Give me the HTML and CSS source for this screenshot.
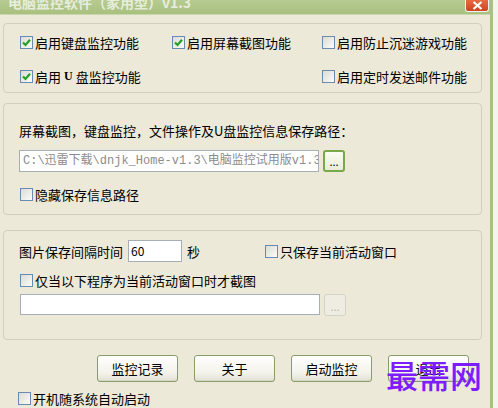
FILE: index.html
```html
<!DOCTYPE html>
<html lang="zh-CN">
<head>
    <meta charset="UTF-8">
    <title>电脑监控软件（家用型）v1.3</title>
    <link rel="stylesheet" href="styles.css">
</head>
<body>
    <div class="window">
        <div class="titlebar">
            <span class="title">电脑监控软件（家用型）v1.3</span>
            <span class="close">
                <svg width="11" height="9" viewBox="0 0 11 9"><path d="M1.5 1 L9.5 8 M9.5 1 L1.5 8" stroke="#fff" stroke-width="2.2"/></svg>
            </span>
        </div>

        <div class="main">
            <div class="group features">
                <label class="check"><span class="cb on"><svg width="11" height="11" viewBox="0 0 11 11"><path d="M2 5.5 L4.5 8 L9 2.8" fill="none" stroke="#21a121" stroke-width="2.2"/></svg></span>启用键盘监控功能</label>
                <label class="check"><span class="cb on"><svg width="11" height="11" viewBox="0 0 11 11"><path d="M2 5.5 L4.5 8 L9 2.8" fill="none" stroke="#21a121" stroke-width="2.2"/></svg></span>启用屏幕截图功能</label>
                <label class="check"><span class="cb"></span>启用防止沉迷游戏功能</label>
                <label class="check"><span class="cb on"><svg width="11" height="11" viewBox="0 0 11 11"><path d="M2 5.5 L4.5 8 L9 2.8" fill="none" stroke="#21a121" stroke-width="2.2"/></svg></span>启用<b class="u">U</b>盘监控功能</label>
                <label class="check col3"><span class="cb"></span>启用定时发送邮件功能</label>
            </div>

            <div class="group paths">
                <div class="caption">屏幕截图，键盘监控，文件操作及U盘监控信息保存路径：</div>
                <div class="field-row">
                    <div class="input path">C:\迅雷下载\dnjk_Home-v1.3\电脑监控试用版v1.3</div>
                    <span class="browse">...</span>
                </div>
                <label class="check hide-path"><span class="cb"></span>隐藏保存信息路径</label>
            </div>

            <div class="group shots">
                <div class="interval">
                    <span>图片保存间隔时间</span>
                    <div class="input small">60</div>
                    <span>秒</span>
                    <label class="check active-only"><span class="cb"></span>只保存当前活动窗口</label>
                </div>
                <label class="check only-when"><span class="cb"></span>仅当以下程序为当前活动窗口时才截图</label>
                <div class="field-row">
                    <div class="input program"></div>
                    <span class="browse disabled">...</span>
                </div>
            </div>

            <div class="buttons">
                <button>监控记录</button>
                <button>关于</button>
                <button>启动监控</button>
                <button>退出</button>
            </div>

            <label class="check startup"><span class="cb"></span>开机随系统自动启动</label>
        </div>

        <div class="watermark">最需网</div>
    </div>
</body>
</html>
```

FILE: styles.css
```css
* { box-sizing: border-box; }
body { margin: 0; width: 498px; height: 408px; overflow: hidden; background: #f4f4ee; font-family: "Noto Sans CJK SC", sans-serif; font-size: 13px; color: #000; }
.window { position: relative; width: 493px; height: 408px; background: #ece9d8; border-right: 3px solid #a9c184; }

.titlebar { height: 15px; display: flex; justify-content: space-between; overflow: hidden; background: linear-gradient(#b7cb91, #a9c07f); border-bottom: 1px solid #c9d7ae; }
.title { margin: -8px 0 0 8px; line-height: 20px; font-size: 14px; font-weight: bold; color: rgba(255, 255, 255, 0.7); }
.close { width: 24px; height: 12px; margin-right: 1px; display: flex; align-items: center; justify-content: center; background: linear-gradient(#e66a42, #cc4420); border: 1px solid #f2f2f2; border-top: 0; border-radius: 0 0 3px 3px; }

.main { padding: 8px 8px 0 3px; }
.group { border: 1px solid #d0d0bf; border-radius: 4px; padding-left: 16px; }

.check { display: flex; align-items: center; gap: 2px; height: 16px; white-space: nowrap; }
.cb { width: 13px; height: 13px; flex: none; display: flex; align-items: center; justify-content: center; border: 1px solid #6a8bb0; background: linear-gradient(135deg, #dcdcd5, #fbfbf8); }
.u { font-family: "Liberation Serif", serif; font-size: 12px; margin: 0 1px; }

.features { height: 70px; padding-top: 10px; display: grid; grid-template-columns: 152px 150px auto; grid-template-rows: 16px 16px; row-gap: 18px; }
.features .col3 { grid-column: 3; }

.paths { height: 112px; margin-top: 10px; padding-top: 19px; }
.caption { height: 16px; line-height: 16px; margin-left: -1px; }
.field-row { display: flex; gap: 4px; margin-top: 11px; }
.input { height: 22px; background: #fff; border: 1px solid #a7afb6; padding: 0 3px; line-height: 20px; white-space: nowrap; overflow: hidden; }
.path { width: 300px; margin-left: -1px; color: #8c8c8c; font-family: "Liberation Mono", "Noto Sans CJK SC", monospace; font-size: 12px; }
.browse { width: 22px; height: 22px; display: flex; align-items: flex-end; justify-content: center; padding-bottom: 3px; font-size: 11px; line-height: 1; border: 2px solid #78a84a; border-radius: 3px; background: linear-gradient(#fbfbf2, #e8ecd8); }
.browse.disabled { border: 1px solid #d3d3c4; color: #b8b8ab; background: #efede2; }
.hide-path { margin-top: 14px; }

.shots { height: 110px; margin-top: 15px; padding-top: 9px; }
.interval { display: flex; align-items: center; gap: 5px; height: 22px; margin-left: -1px; }
.small { width: 54px; padding-left: 2px; font-size: 12px; }
.active-only { margin-left: 60px; }
.only-when { margin-top: 10px; }
.shots .field-row { margin-top: 6px; }
.program { width: 300px; height: 21px; }

.buttons { display: flex; gap: 16px; margin: 15px 0 0 94px; }
button { width: 81px; height: 27px; padding: 0; font-family: inherit; font-size: 13px; color: #000; border: 1px solid #889d68; border-radius: 3px; background: linear-gradient(#ffffff, #f3f2ea 70%, #e2e0d2); box-shadow: inset 0 -1px 0 #d8d6c6; }
.startup { margin: 8px 0 0 15px; }

.watermark { position: absolute; left: 386px; top: 352px; font-size: 32px; line-height: 44px; font-weight: 500; color: #7d1cff; }
```
